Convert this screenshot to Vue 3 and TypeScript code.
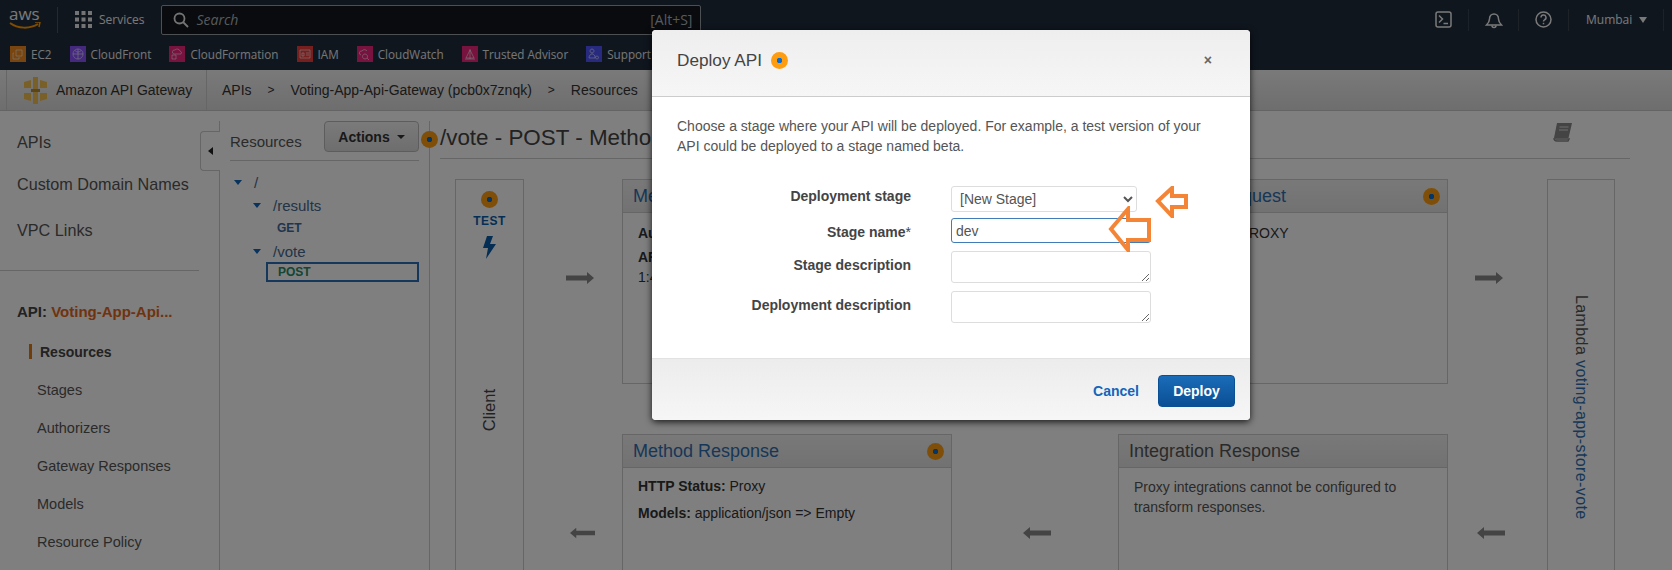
<script setup lang="ts">
import { ref } from 'vue';

type Shortcut = { name: string; color: string; glyph: string };

/**
 * Favourites bar
 */
const shortcuts: Shortcut[] = [
  { name: 'EC2', color: '#f08a20', glyph: 'M6 4h6v6H6z M4 7H3v6h6v-2' },
  { name: 'CloudFront', color: '#8a52ff', glyph: 'M8 3a5 5 0 1 0 .01 0z M8 3v10 M3 8h10 M5 4.500c2 2 4 2 6 0' },
  { name: 'CloudFormation', color: '#f0257f', glyph: 'M5 8a2 2 0 0 1 1-4 3 3 0 0 1 5 1 2 2 0 0 1 1 3z M3 9h4v4H3z' },
  { name: 'IAM', color: '#ee3f3f', glyph: 'M3 4h10v8H3z M5 7h2v3H5z M9 7h3 M9 9h3' },
  { name: 'CloudWatch', color: '#f0257f', glyph: 'M4 9a2 2 0 0 1 1-4 3 3 0 0 1 5 0 M8 8a2.500 2.500 0 1 0 .01 0z M10 12l2 2' },
  { name: 'Trusted Advisor', color: '#f0257f', glyph: 'M8 3v10 M8 4l-2 4-2 4h8l-2-4z M3 13h10' },
  { name: 'Support', color: '#4f55ff', glyph: 'M6 3a2 2 0 1 0 .01 0z M3 12c0-3 2-4 3-4s2 .5 3 2v2z M11 10a1.500 1.500 0 1 0 .01 0z' },
];

const apiLinks = ['APIs', 'Custom Domain Names', 'VPC Links'];
const apiPages = ['Resources', 'Stages', 'Authorizers', 'Gateway Responses', 'Models', 'Resource Policy'];

/**
 * Local form state
 */
const stage = ref('new');
const stageName = ref('dev');
const stageDescription = ref('');
const deploymentDescription = ref('');
</script>

<template>
  <div class="page">
    <header class="top-nav">
      <div class="aws-logo">
        <span>aws</span>
        <svg width="32" height="8" viewBox="0 0 32 8"><path d="M1 1c8 6 20 6 28 1" fill="none" stroke="#ff9900" stroke-width="2" /><path d="M26 0l5 0-1 5" fill="none" stroke="#ff9900" stroke-width="1.500" /></svg>
      </div>
      <div class="nav-sep"></div>
      <svg class="grid-icon" width="17" height="17" viewBox="0 0 17 17" fill="#e8e8e8">
        <rect v-for="n in 9" :key="n" :x="((n - 1) % 3) * 6.500" :y="Math.floor((n - 1) / 3) * 6.500" width="4" height="4" />
      </svg>
      <span class="services">Services</span>
      <div class="search">
        <svg width="16" height="16" viewBox="0 0 16 16" fill="none" stroke="#e8e8e8" stroke-width="1.800"><circle cx="6.500" cy="6.500" r="5" /><path d="M10 10l5 5" /></svg>
        <span class="search-text">Search</span>
        <span class="search-key">[Alt+S]</span>
      </div>
      <div class="nav-right">
        <div class="nav-cell">
          <svg width="17" height="17" viewBox="0 0 17 17" fill="none" stroke="#f2f3f3" stroke-width="1.500"><rect x="1" y="1" width="15" height="15" rx="2" /><path d="M4 4.500l3.500 3.500L4 11.500M8.500 12.500H13" /></svg>
        </div>
        <div class="nav-cell">
          <svg width="18" height="18" viewBox="0 0 18 18" fill="none" stroke="#f2f3f3" stroke-width="1.500"><path d="M1.500 14c2-2 3-3 3-6s2-5 4.500-5 4.500 2 4.500 5 1 4 3 6z" /><path d="M7 14.500a2 2 0 0 0 4 0" /></svg>
        </div>
        <div class="nav-cell">
          <svg width="17" height="17" viewBox="0 0 17 17" fill="none" stroke="#f2f3f3" stroke-width="1.500"><circle cx="8.500" cy="8.500" r="7.500" /><path d="M6 6.500a2.500 2.500 0 1 1 3.500 2.300c-.8.4-1 .8-1 1.700" /><path d="M8.500 11.800v1.500" /></svg>
        </div>
        <div class="region"><span>Mumbai</span><i class="region-caret"></i></div>
      </div>
    </header>

    <nav class="favourites">
      <div v-for="item in shortcuts" :key="item.name" class="shortcut">
        <svg width="16" height="16" viewBox="0 0 16 16">
          <rect width="16" height="16" :fill="item.color" />
          <path :d="item.glyph" fill="none" stroke="#f6f6f6" stroke-opacity=".75" stroke-width=".8" />
        </svg>
        <span>{{ item.name }}</span>
      </div>
    </nav>

    <div class="sub-header">
      <div class="brand">
        <svg width="23" height="27" viewBox="0 0 23 27" fill="#f0c050">
          <rect x="9" y="0" width="5" height="27" />
          <path d="M0 5l7-2v8H0zM23 5l-7-2v8h7zM0 16h7v8l-7-2zM23 16h-7v8l7-2z" />
          <rect x="7" y="12" width="9" height="3" fill="#b88c30" />
        </svg>
        <span>Amazon API Gateway</span>
      </div>
      <div class="crumbs">
        <span>APIs</span><span class="crumb-sep">&gt;</span>
        <span>Voting-App-Api-Gateway (pcb0x7znqk)</span><span class="crumb-sep">&gt;</span>
        <span>Resources</span>
      </div>
    </div>

    <div class="content">
      <aside class="sidebar">
        <a v-for="link in apiLinks" :key="link" class="api-link">{{ link }}</a>
        <div class="side-rule"></div>
        <div class="api-name">API: <span>Voting-App-Api...</span></div>
        <a v-for="(pageName, i) in apiPages" :key="pageName" class="page-link" :class="{ active: i === 0 }">{{ pageName }}</a>
        <div class="collapse-tab"><i></i></div>
      </aside>

      <section class="resources">
        <div class="res-head">
          <span>Resources</span>
          <button class="actions">Actions <i></i></button>
        </div>
        <div class="tree">
          <div class="tree-row root"><i></i><span>/</span></div>
          <div class="tree-row path results"><i></i><span>/results</span></div>
          <div class="tree-method">GET</div>
          <div class="tree-row path vote"><i></i><span>/vote</span></div>
          <div class="tree-method selected">POST</div>
        </div>
      </section>

      <main class="main">
        <span class="badge title-badge"></span>
        <div class="main-head">
          <h1>/vote - POST - Method Execution</h1>
          <svg class="book" width="22" height="20" viewBox="0 0 22 20"><path d="M5 1h15l-3.500 15H2z" fill="#888" /><path d="M2 16c0 2 1 3 3 3h11l1-2H5c-1 0-1.500-.5-1-1" fill="none" stroke="#888" stroke-width="1.500" /><path d="M7.500 5h9M7 8h9" stroke="#ddd" /></svg>
        </div>

        <div class="flow">
          <div class="client">
            <span class="badge"></span>
            <b>TEST</b>
            <svg width="13" height="23" viewBox="0 0 13 23"><path d="M4 0h6L7 8h6L3 23l2-11H0z" fill="#0a5cab" /></svg>
            <span class="client-label">Client</span>
          </div>

          <svg class="arrow a-1" width="28" height="12" viewBox="0 0 28 12"><path d="M0 3.500h21V0l7 6-7 6V8.500H0z" /></svg>

          <div class="box request">
            <div class="box-head"><span>Method Request</span></div>
            <div class="box-body">
              <p><b>Auth:</b> NONE</p>
              <p><b>ARN:</b> arn:aws:execute-api:ap-south-<br />1:4</p>
            </div>
          </div>

          <svg class="arrow a-2" width="28" height="12" viewBox="0 0 28 12"><path d="M0 3.500h21V0l7 6-7 6V8.500H0z" /></svg>

          <div class="box request2">
            <div class="box-head">
              <span>Integration Request</span>
              <span class="badge"></span>
            </div>
            <div class="box-body">
              <p><b>Type:</b> LAMBDA_PROXY</p>
            </div>
          </div>

          <svg class="arrow a-3" width="28" height="12" viewBox="0 0 28 12"><path d="M0 3.500h21V0l7 6-7 6V8.500H0z" /></svg>

          <div class="lambda"><span>Lambda <a>voting-app-store-vote</a></span></div>

          <svg class="arrow a-4" width="25" height="12" viewBox="0 0 28 12"><path d="M28 3.500H7V0L0 6l7 6V8.500h21z" /></svg>

          <div class="box response">
            <div class="box-head">
              <span>Method Response</span>
              <span class="badge"></span>
            </div>
            <div class="box-body">
              <p class="tight"><b>HTTP Status:</b> Proxy</p>
              <p class="tight"><b>Models:</b> application/json =&gt; Empty</p>
            </div>
          </div>

          <svg class="arrow a-5" width="28" height="12" viewBox="0 0 28 12"><path d="M28 3.500H7V0L0 6l7 6V8.500h21z" /></svg>

          <div class="box response2">
            <div class="box-head grey"><span>Integration Response</span></div>
            <div class="box-body note">Proxy integrations cannot be configured to transform responses.</div>
          </div>

          <svg class="arrow a-6" width="28" height="12" viewBox="0 0 28 12"><path d="M28 3.500H7V0L0 6l7 6V8.500h21z" /></svg>
        </div>
      </main>
    </div>

    <div class="backdrop"></div>

    <div class="modal">
      <div class="modal-head">
        <h2>Deploy API</h2>
        <span class="badge bright"></span>
        <span class="close">×</span>
      </div>
      <div class="modal-body">
        <p class="intro">Choose a stage where your API will be deployed. For example, a test version of your API could be deployed to a stage named beta.</p>
        <div class="form">
          <label class="first">Deployment stage</label>
          <select v-model="stage" class="stage-select">
            <option value="new">[New Stage]</option>
          </select>
          <label>Stage name<span class="req">*</span></label>
          <input v-model="stageName" class="stage-input" />
          <label>Stage description</label>
          <textarea v-model="stageDescription"></textarea>
          <label>Deployment description</label>
          <textarea v-model="deploymentDescription"></textarea>
        </div>
      </div>
      <div class="modal-foot">
        <a class="cancel">Cancel</a>
        <button class="deploy">Deploy</button>
      </div>

      <!-- Hand-drawn annotations -->
      <svg class="callout c-1" width="34" height="32" viewBox="0 0 34 32">
        <path d="M3 15L17 2v8h14v11H17v9z" />
      </svg>
      <svg class="callout c-2" width="44" height="46" viewBox="0 0 44 46">
        <path d="M3 23L20 3v11h21v20H20v10z" />
      </svg>
    </div>
  </div>
</template>

<style>
html,
body {
  margin: 0;
  background: #fff;
}
</style>

<style scoped>
.page {
  position: relative;
  width: 1672px;
  height: 570px;
  overflow: hidden;
  background: #fff;
  color: #333;
  font-family: 'Liberation Sans', Arial, sans-serif;
  font-size: 14px;
}

/* Top navigation */
.top-nav {
  display: flex;
  align-items: center;
  box-sizing: border-box;
  height: 41px;
  padding-bottom: 2px;
  background: #202c3c;
  color: #f2f3f3;
  font-family: 'Open Sans', sans-serif;
  font-size: 12px;
}

.aws-logo {
  display: flex;
  flex-direction: column;
  width: 32px;
  margin-left: 9px;
  line-height: 14px;
  font-size: 17px;
  height: 26px;
}

.aws-logo span {
  height: 15px;
}

.aws-logo svg {
  display: block;
}

.nav-sep {
  width: 1px;
  height: 26px;
  margin-left: 16px;
  background: #4a5563;
}

.grid-icon {
  margin-left: 17px;
}

.services {
  margin-left: 7px;
}

.search {
  display: flex;
  align-items: center;
  box-sizing: border-box;
  width: 540px;
  height: 30px;
  margin-left: 17px;
  padding: 0 11px;
  background: #12161c;
  border: 1px solid #9aa0a6;
  border-radius: 2px;
}

.search-text {
  margin-left: 7px;
  color: #aeb4bb;
  font-style: italic;
  font-size: 14px;
}

.search-key {
  margin-left: auto;
  margin-right: -3px;
  color: #aeb4bb;
  font-size: 14px;
}

.nav-right {
  display: flex;
  align-items: center;
  height: 30px;
  margin-left: auto;
  margin-right: 8px;
}

.nav-cell {
  display: flex;
  align-items: center;
  justify-content: center;
  width: 50px;
  height: 22px;
  border-right: 1px solid #3a4552;
  box-sizing: border-box;
}

.region {
  display: flex;
  align-items: center;
  gap: 7px;
  width: 95px;
  height: 22px;
  box-sizing: border-box;
  padding-left: 17px;
  border-right: 1px solid #3a4552;
}

.region-caret {
  border-left: 4px solid transparent;
  border-right: 4px solid transparent;
  border-top: 6px solid #f2f3f3;
}

/* Favourites */
.favourites {
  display: flex;
  align-items: center;
  gap: 18px;
  box-sizing: border-box;
  height: 29px;
  padding: 0 0 3px 10px;
  background: #202c3c;
  color: #eaeded;
  font-family: 'Open Sans', sans-serif;
  font-size: 11.700px;
}

.shortcut {
  display: flex;
  align-items: center;
  gap: 5px;
}

/* Breadcrumb bar */
.sub-header {
  display: flex;
  align-items: center;
  box-sizing: border-box;
  height: 41px;
  padding-left: 6px;
  background: linear-gradient(#f4f4f4, #dcdcdc);
  border-bottom: 1px solid #c8c8c8;
}

.brand {
  display: flex;
  align-items: center;
  gap: 9px;
  box-sizing: border-box;
  width: 201px;
  height: 40px;
  padding-left: 17px;
  border-left: 1px solid #ccc;
  border-right: 1px solid #ccc;
}

.crumbs {
  display: flex;
  margin-left: 15px;
  gap: 0;
}

.crumb-sep {
  margin: 0 16px;
  font-size: 12px;
  line-height: 16px;
}

/* Three panes */
.content {
  display: flex;
  height: 460px;
  padding-top: 10px;
}

.sidebar {
  position: relative;
  flex: none;
  box-sizing: border-box;
  width: 220px;
  border-right: 1px solid #ccc;
}

.api-link {
  display: block;
  height: 40px;
  padding-left: 17px;
  color: #555;
  font-size: 16.200px;
  line-height: 42px;
}

.api-link:nth-child(2) {
  margin-top: 2px;
}

.api-link:nth-child(3) {
  margin-top: 6px;
}

.side-rule {
  width: 199px;
  height: 1px;
  margin-top: 21px;
  background: #ccc;
}

.api-name {
  height: 20px;
  margin-top: 31px;
  padding-left: 17px;
  color: #444;
  font-size: 15px;
  font-weight: 700;
  line-height: 20px;
}

.api-name span {
  color: #e0661a;
}

.page-link {
  display: block;
  height: 38px;
  padding-left: 37px;
  color: #555;
  font-size: 14.500px;
  line-height: 40px;
}

.page-link.active {
  margin-top: 10px;
  padding-left: 40px;
  color: #444;
  font-weight: 700;
  font-size: 14px;
  position: relative;
}

.page-link.active::before {
  content: '';
  position: absolute;
  left: 29px;
  top: 12px;
  width: 3px;
  height: 15px;
  background: #e07b10;
}

.collapse-tab {
  position: absolute;
  left: 200px;
  top: 10px;
  display: flex;
  align-items: center;
  justify-content: center;
  box-sizing: border-box;
  width: 20px;
  height: 40px;
  background: #fff;
  border: 1px solid #ccc;
  border-right: 0;
  border-radius: 4px 0 0 4px;
}

.collapse-tab i {
  border-top: 4px solid transparent;
  border-bottom: 4px solid transparent;
  border-right: 5px solid #222;
}

.resources {
  flex: none;
  box-sizing: border-box;
  width: 210px;
  padding: 0 10px;
  border-right: 1px solid #ccc;
}

.res-head {
  display: flex;
  align-items: flex-start;
  justify-content: space-between;
  height: 39px;
  border-bottom: 1px solid #ccc;
  font-size: 15px;
  color: #555;
}

.res-head > span {
  margin-top: 12px;
}

.actions {
  display: flex;
  align-items: center;
  justify-content: center;
  gap: 7px;
  box-sizing: border-box;
  width: 95px;
  height: 31px;
  background: linear-gradient(#f5f5f5, #dcdcdc);
  border: 1px solid #bbb;
  border-radius: 4px;
  color: #333;
  font-family: inherit;
  font-size: 14px;
  font-weight: 700;
}

.actions i {
  border-left: 4px solid transparent;
  border-right: 4px solid transparent;
  border-top: 4px solid #333;
}

.tree {
  margin-top: 10px;
  color: #46688f;
}

.tree-row {
  display: flex;
  align-items: center;
  height: 22px;
  font-size: 15px;
}

.tree-row i {
  width: 0;
  border-left: 4.500px solid transparent;
  border-right: 4.500px solid transparent;
  border-top: 5px solid #1166bb;
}

.tree-row span {
  margin-left: 12px;
}

.tree-row.path {
  padding-left: 23px;
}

.tree-row.root {
  padding-left: 4px;
}

.tree-row.results {
  margin-top: 1px;
  margin-bottom: 1px;
}

.tree-row.vote {
  margin-top: 1px;
}

.tree-method {
  box-sizing: border-box;
  height: 22px;
  margin-left: 36px;
  padding-left: 11px;
  color: #3e6aa0;
  font-size: 12px;
  font-weight: 700;
  line-height: 22px;
}

.tree-method.selected {
  height: 20px;
  margin-left: 36px;
  margin-right: 0;
  padding-left: 10px;
  border: 2px solid #2a6fb8;
  color: #2a8a66;
  line-height: 16px;
}

/* Method execution */
.main {
  position: relative;
  flex: 1;
  padding: 0 42px 0 10px;
}

.main-head {
  position: relative;
  height: 37px;
  border-bottom: 1px solid #ccc;
}

.main-head h1 {
  margin: 0;
  color: #444;
  font-size: 22.400px;
  font-weight: 400;
  line-height: 34px;
}

.book {
  position: absolute;
  right: 56px;
  top: 1px;
}

.badge {
  display: inline-block;
  flex: none;
  box-sizing: border-box;
  width: 17px;
  height: 17px;
  border-radius: 50%;
  background: radial-gradient(circle, #0a6cd0 0 2.500px, #ff9d10 3px);
}

.title-badge {
  position: absolute;
  left: -9px;
  top: 10px;
}

.badge.bright {
  margin-left: 9px;
}

.flow {
  display: grid;
  grid-template-columns: 69px 98px 330px 166px 330px 99px 68px;
  grid-template-rows: 205px 50px 300px;
  margin: 20px 0 0 15px;
}

.client,
.lambda {
  grid-row: 1 / 4;
  box-sizing: border-box;
  border: 1px solid #ccc;
}

.client {
  display: flex;
  flex-direction: column;
  align-items: center;
  padding-top: 11px;
  color: #0a5cab;
}

.client b {
  margin-top: 6px;
  font-size: 12px;
  letter-spacing: .4px;
}

.client svg {
  margin-top: 8px;
}

.client-label {
  margin-top: 130px;
  color: #444;
  font-size: 16.500px;
  writing-mode: vertical-rl;
  transform: rotate(180deg);
}

.lambda {
  grid-column: 7;
  grid-row: 1 / 4;
  display: flex;
  flex-direction: column;
  align-items: center;
  padding-top: 115px;
  color: #555;
  font-size: 16px;
  letter-spacing: .4px;
}

.lambda span {
  writing-mode: vertical-rl;
}

.lambda a {
  color: #2f6fb0;
}

.arrow {
  margin-top: 93px;
  fill: #888;
}

.a-1 {
  grid-column: 2;
  grid-row: 1;
  margin-left: 42px;
}

.a-2 {
  grid-column: 4;
  grid-row: 1;
  margin-left: 68px;
}

.a-3 {
  grid-column: 6;
  grid-row: 1;
  margin-left: 27px;
}

.a-4 {
  grid-column: 2;
  grid-row: 3;
  margin-left: 46px;
}

.a-5 {
  grid-column: 4;
  grid-row: 3;
  margin-left: 71px;
}

.a-6 {
  grid-column: 6;
  grid-row: 3;
  margin-left: 29px;
}

.box {
  box-sizing: border-box;
  border: 1px solid #ccc;
}

.box.request {
  grid-column: 3;
  grid-row: 1;
}

.box.request2 {
  grid-column: 5;
  grid-row: 1;
}

.box.response {
  grid-column: 3;
  grid-row: 3;
}

.box.response2 {
  grid-column: 5;
  grid-row: 3;
}

.box-head {
  display: flex;
  align-items: center;
  justify-content: space-between;
  box-sizing: border-box;
  height: 33px;
  padding: 1px 7px 0 10px;
  background: linear-gradient(#f2f2f2, #e4e4e4);
  border-bottom: 1px solid #ccc;
  color: #2f6fb0;
  font-size: 18px;
}

.box-head.grey {
  color: #555;
}

.box-body {
  padding: 10px 15px;
  color: #333;
  font-size: 14px;
}

.box-body p {
  margin: 0 0 4px;
  line-height: 20px;
}

.box-body p.tight {
  margin-bottom: 10px;
  line-height: 17px;
}

.box-body.note {
  padding-top: 9px;
  color: #555;
  line-height: 20px;
}

/* Dimmed backdrop and dialog */
.backdrop {
  position: absolute;
  inset: 0;
  background: rgba(0, 0, 0, 0.5);
}

.modal {
  position: absolute;
  left: 652px;
  top: 30px;
  display: flex;
  flex-direction: column;
  width: 598px;
  height: 390px;
  background: #fff;
  border-radius: 4px;
  box-shadow: 0 2px 7px rgba(0, 0, 0, 0.8);
}

.modal-head {
  display: flex;
  align-items: center;
  box-sizing: border-box;
  height: 67px;
  padding: 0 25px 6px;
  background: linear-gradient(#eeeeee, #f6f6f6);
  border-bottom: 1px solid #ccc;
  border-radius: 4px 4px 0 0;
}

.modal-head h2 {
  margin: 0;
  color: #444;
  font-size: 17.200px;
  font-weight: 400;
}

.close {
  margin-left: auto;
  margin-right: 13px;
  margin-bottom: 1px;
  color: #666;
  font-size: 14px;
  font-weight: 700;
}

.modal-body {
  flex: 1;
  padding: 19px 25px 0;
}

.intro {
  width: 530px;
  margin: 0 0 30px;
  color: #555;
  font-size: 14px;
  line-height: 20px;
}

.form {
  display: grid;
  grid-template-columns: 234px 200px;
  column-gap: 40px;
  row-gap: 7px;
  align-items: start;
}

.form label {
  padding-top: 4px;
  color: #444;
  font-size: 14px;
  font-weight: 700;
  line-height: 20px;
  text-align: right;
}

.form label.first {
  padding-top: 0;
}

.req {
  font-weight: 400;
}

.stage-select {
  box-sizing: border-box;
  width: 186px;
  height: 26px;
  margin-bottom: -1px;
  padding-left: 4px;
  background: #fff;
  border: 1px solid #ddd;
  border-radius: 3px;
  color: #555;
  font-family: inherit;
  font-size: 14px;
}

.stage-input {
  box-sizing: border-box;
  width: 200px;
  height: 25px;
  margin-bottom: 1px;
  padding: 0 4px;
  border: 1px solid #3f7cb8;
  border-radius: 3px;
  color: #555;
  font-family: inherit;
  font-size: 14px;
  outline: none;
}

.form textarea {
  display: block;
  box-sizing: border-box;
  width: 200px;
  height: 32px;
  margin-bottom: 1px;
  padding: 4px;
  border: 1px solid #ddd;
  border-radius: 3px;
  outline: none;
}

.modal-foot {
  display: flex;
  align-items: center;
  justify-content: flex-end;
  box-sizing: border-box;
  height: 62px;
  padding: 2px 15px 0 0;
  background: linear-gradient(#ececec, #f6f6f6);
  border-top: 1px solid #e2e2e2;
  border-radius: 0 0 4px 4px;
}

.cancel {
  margin-right: 19px;
  color: #1166bb;
  font-size: 14px;
  font-weight: 700;
}

.deploy {
  box-sizing: border-box;
  width: 77px;
  height: 32px;
  background: linear-gradient(#1a6cb8, #0b4f94);
  border: 1px solid #0b4f94;
  border-radius: 4px;
  color: #fff;
  font-family: inherit;
  font-size: 14px;
  font-weight: 700;
}

.callout {
  position: absolute;
  fill: none;
  stroke: #f58536;
  stroke-width: 4;
}

.c-1 {
  left: 503px;
  top: 156px;
}

.c-2 {
  left: 456px;
  top: 176px;
}
</style>
